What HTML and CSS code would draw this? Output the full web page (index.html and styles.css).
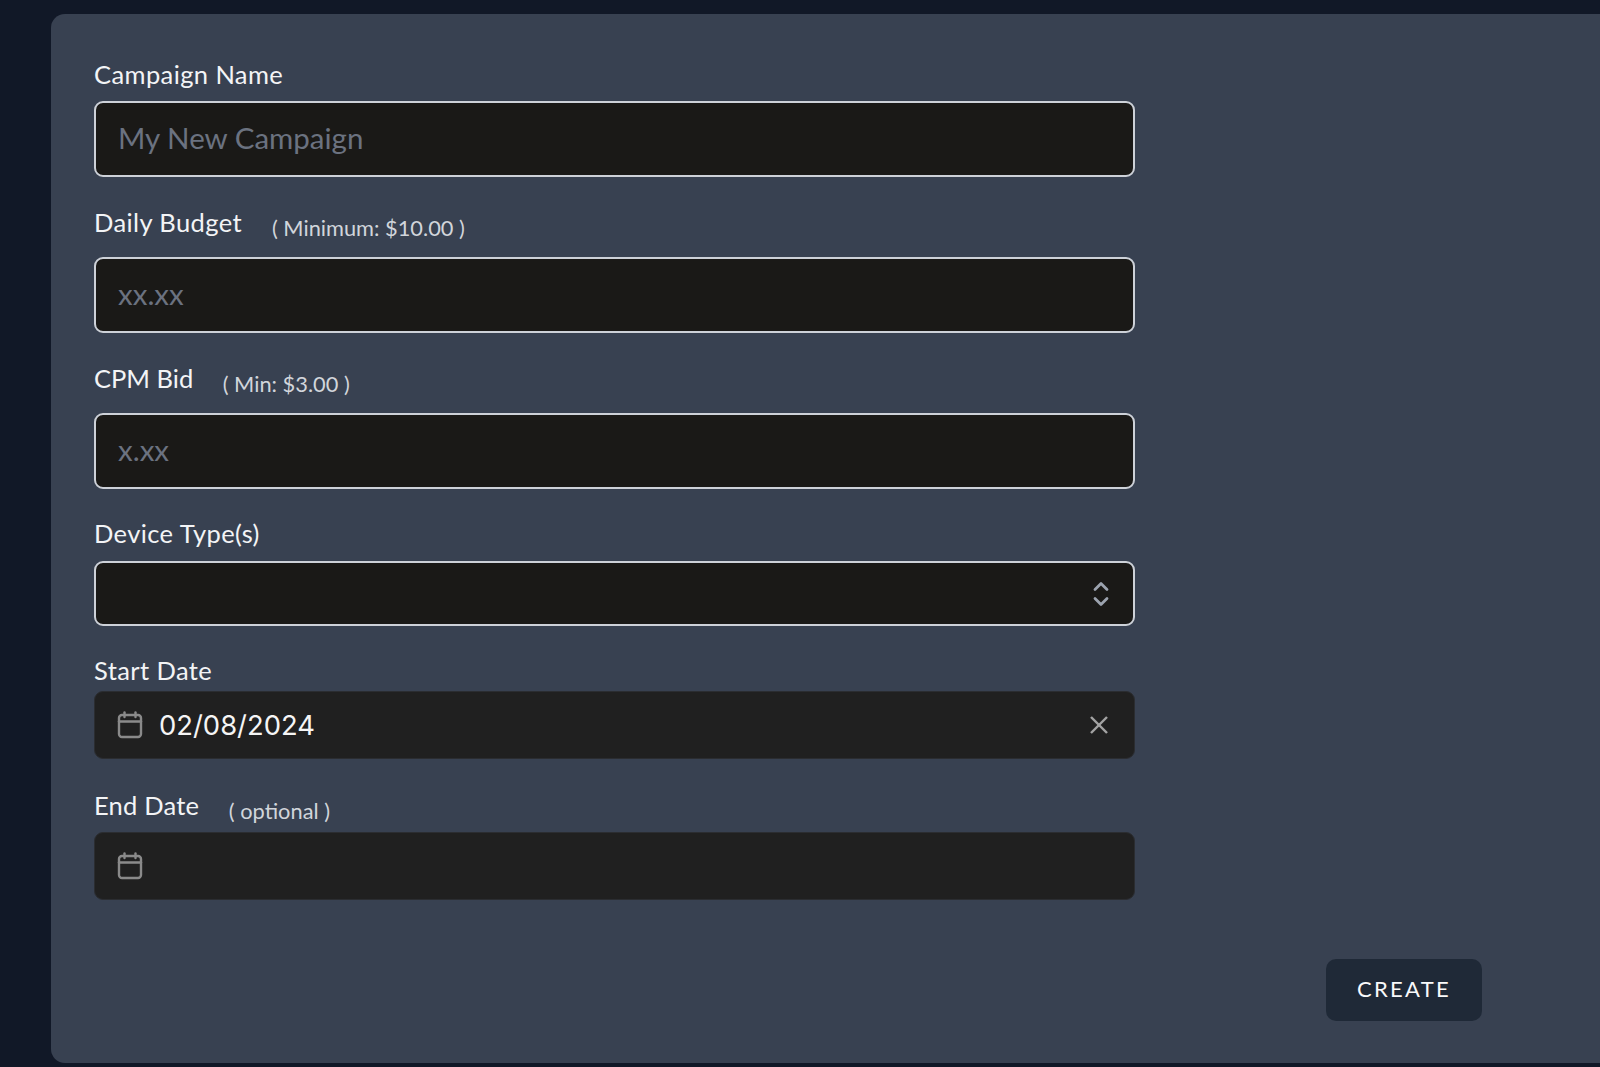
FILE: index.html
```html
<!DOCTYPE html>
<html lang="en">

<head>
    <meta charset="UTF-8">
    <title>Create Campaign</title>
    <link rel="stylesheet" href="styles.css">
</head>

<body>

    <main class="card">
        <form class="form">

            <div class="field field-name">
                <label class="label">Campaign Name</label>
                <div class="input input-text"><span class="placeholder">My New Campaign</span></div>
            </div>

            <div class="field field-budget">
                <label class="label">Daily Budget <span class="hint">( Minimum: $10.00 )</span></label>
                <div class="input input-text"><span class="placeholder">xx.xx</span></div>
            </div>

            <div class="field field-cpm">
                <label class="label">CPM Bid <span class="hint">( Min: $3.00 )</span></label>
                <div class="input input-text"><span class="placeholder">x.xx</span></div>
            </div>

            <div class="field field-device">
                <label class="label">Device Type(s)</label>
                <div class="input input-select">
                    <svg class="icon-updown" width="20" height="28" viewBox="0 0 20 28" fill="none" stroke="#9ca3af" stroke-width="2.8" stroke-linecap="round" stroke-linejoin="round">
                        <path d="M4 9.5 10 3.5 16 9.5" />
                        <path d="M4 18.5 10 24.5 16 18.5" />
                    </svg>
                </div>
            </div>

            <div class="field field-start">
                <label class="label">Start Date</label>
                <div class="input input-date">
                    <svg class="icon-cal" width="26" height="28" viewBox="0 0 26 28" fill="none" stroke="#8a8a8a" stroke-width="2.4" stroke-linecap="round">
                        <rect x="2" y="4" width="22" height="22" rx="3" />
                        <path d="M2 10.5H24" />
                        <path d="M7.5 1.5V6" />
                        <path d="M18.5 1.5V6" />
                    </svg>
                    <span class="date-value">02/08/2024</span>
                    <svg class="icon-clear" width="20" height="20" viewBox="0 0 20 20" fill="none" stroke="#a3a3a3" stroke-width="2.4">
                        <path d="M2 2 18 18" />
                        <path d="M18 2 2 18" />
                    </svg>
                </div>
            </div>

            <div class="field field-end">
                <label class="label">End Date <span class="hint">( optional )</span></label>
                <div class="input input-date">
                    <svg class="icon-cal" width="26" height="28" viewBox="0 0 26 28" fill="none" stroke="#8a8a8a" stroke-width="2.4" stroke-linecap="round">
                        <rect x="2" y="4" width="22" height="22" rx="3" />
                        <path d="M2 10.5H24" />
                        <path d="M7.5 1.5V6" />
                        <path d="M18.5 1.5V6" />
                    </svg>
                </div>
            </div>

            <div class="actions">
                <button class="button" type="button">CREATE</button>
            </div>

        </form>
    </main>

</body>

</html>
```

FILE: styles.css
```css
* {
    box-sizing: border-box;
    margin: 0;
}

html,
body {
    height: 100%;
}

body {
    background-color: #111827;
    font-family: 'Lato', 'Open Sans', sans-serif;
    color: #f3f4f6;
    padding: 14px 0 4px 51px;
    overflow: hidden;
}

.card {
    height: 1049px;
    background-color: #384151;
    border-radius: 14px 0 0 14px;
    padding: 46px 118px 0 43px;
}

.form {
    display: flex;
    flex-direction: column;
}

.field {
    width: 1041px;
}

.label {
    display: block;
    height: 30px;
    font-size: 25.5px;
    letter-spacing: 0.4px;
    line-height: 28px;
    color: #f3f4f6;
}

.hint {
    margin-left: 23px;
    font-size: 21.8px;
    letter-spacing: 0;
    color: #d1d5db;
    position: relative;
    top: 4px;
}

.field-name .label {
    margin-bottom: 11px;
}

.field-budget {
    margin-top: 31px;
}

.field-budget .label,
.field-cpm .label {
    margin-bottom: 19px;
}

.field-cpm {
    margin-top: 31px;
}

.field-cpm .label {
    letter-spacing: 0;
}

.field-device {
    margin-top: 30px;
}

.field-device .label {
    margin-bottom: 12px;
}

.field-start {
    margin-top: 30px;
}

.field-start .label {
    margin-bottom: 5px;
}

.field-end {
    margin-top: 32px;
}

.field-end .label {
    margin-bottom: 11px;
    letter-spacing: 0.2px;
}

.input {
    display: flex;
    align-items: center;
    width: 100%;
    padding: 0 22px;
    border-radius: 9px;
}

.input-text,
.input-select {
    background-color: #1a1917;
    border: 2px solid #cdd1d8;
}

.input-text {
    height: 76px;
    padding-bottom: 4px;
}

.input-select {
    height: 65px;
    justify-content: flex-end;
    padding-right: 22px;
}

.input-date {
    height: 68px;
    background-color: #202020;
    border: 1px solid #2b2d31;
    padding-left: 22px;
}

.placeholder {
    font-size: 29.5px;
    color: #6b7280;
}

.icon-cal {
    flex: none;
}

.date-value {
    margin-left: 16px;
    font-family: 'Inter', 'Roboto', sans-serif;
    font-size: 27.4px;
    color: #f5f5f5;
}

.icon-clear {
    margin-left: auto;
    margin-right: 3px;
}

.actions {
    display: flex;
    justify-content: flex-end;
    margin-top: 59px;
}

.button {
    width: 156px;
    height: 62px;
    padding-bottom: 4px;
    background-color: #1f2937;
    border: none;
    border-radius: 10px;
    font-family: 'Lato', 'Open Sans', sans-serif;
    font-size: 22px;
    letter-spacing: 2.3px;
    color: #f9fafb;
}
```
